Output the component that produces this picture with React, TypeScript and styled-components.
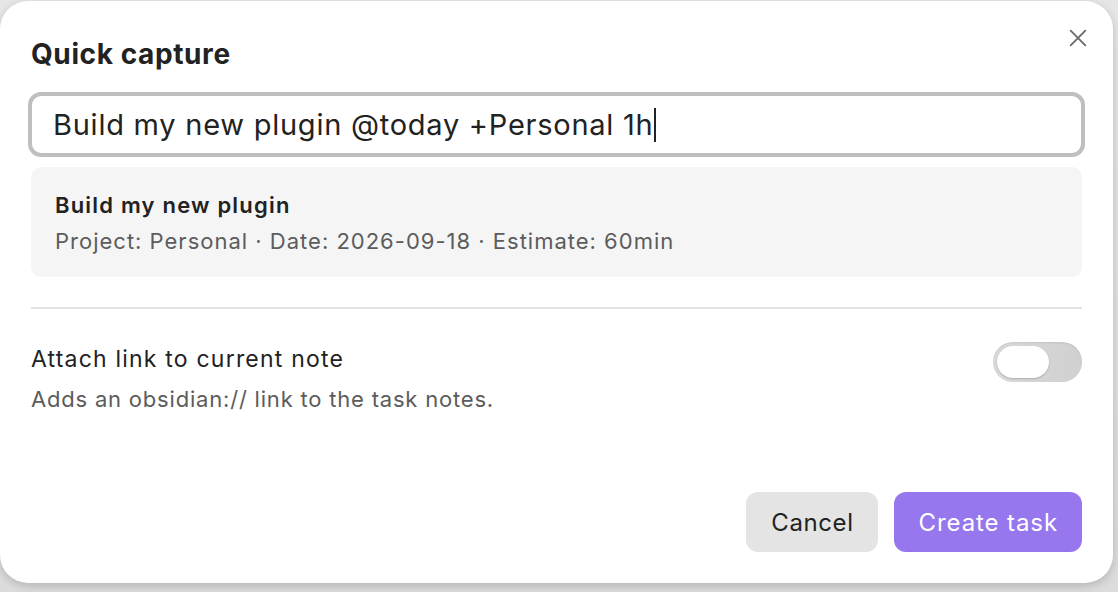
import React from 'react';
import styled, {createGlobalStyle} from 'styled-components';

const Global = createGlobalStyle`
    html, body {
        margin: 0;
        padding: 0;
        background: #e4e4e4;
        font-family: Inter, "Noto Sans", sans-serif;
        -webkit-font-smoothing: antialiased;
    }
`;

const Backdrop = styled.div`
    width: 1118px;
    height: 592px;
    overflow: hidden;
    background: linear-gradient(180deg, #e6e6e6 0%, #dcdcdc 100%);
`;

const Modal = styled.section`
    box-sizing: border-box;
    width: 1113px;
    height: 582px;
    margin-top: 1px;
    background: #ffffff;
    border-radius: 28px;
    box-shadow: 0 3px 10px rgba(0, 0, 0, 0.18);
    padding: 36px 31px 31px 31px;
    display: flex;
    flex-direction: column;
    position: relative;
`;

const Title = styled.h1`
    margin: 0;
    font-size: 28px;
    font-weight: 700;
    color: #222222;
    line-height: 34px;
    letter-spacing: 0.6px;
`;

const Close = styled.button`
    position: absolute;
    top: 24px;
    right: 22px;
    width: 26px;
    height: 26px;
    padding: 0;
    border: none;
    background: transparent;
    display: flex;
    align-items: center;
    justify-content: center;
    color: #6a6a6a;
`;

const Input = styled.div`
    box-sizing: border-box;
    margin: 21px -3px 0 -3px;
    height: 65px;
    border: 4px solid #bfbfbf;
    border-radius: 13px;
    padding: 0 0 0 21px;
    display: flex;
    align-items: center;
    font-size: 29px;
    color: #222222;
    letter-spacing: 0.75px;
`;

const Caret = styled.span`
    display: inline-block;
    width: 2px;
    height: 34px;
    background: #222;
`;

const Preview = styled.div`
    margin-top: 10px;
    background: #f5f5f5;
    border-radius: 10px;
    padding: 25px 24px 23px 24px;
    display: flex;
    flex-direction: column;
    gap: 10px;
`;

const PreviewTitle = styled.div`
    font-size: 22px;
    font-weight: 600;
    color: #222222;
    line-height: 26px;
    letter-spacing: 1.2px;
`;

const Meta = styled.div`
    font-size: 22px;
    color: #5c5c5c;
    line-height: 26px;
    letter-spacing: 1px;
`;

const Divider = styled.hr`
    margin: 30px 0 0 0;
    border: none;
    border-top: 2px solid #e3e3e3;
`;

const SettingRow = styled.div`
    margin-top: 36px;
    display: flex;
    justify-content: space-between;
    align-items: flex-start;
`;

const SettingText = styled.div`
    display: flex;
    flex-direction: column;
    gap: 13px;
`;

const SettingName = styled.div`
    font-size: 23px;
    color: #222222;
    line-height: 28px;
    letter-spacing: 1.2px;
`;

const SettingDesc = styled.div`
    font-size: 22px;
    color: #5c5c5c;
    line-height: 26px;
    letter-spacing: 0.8px;
`;

const Toggle = styled.div`
    box-sizing: border-box;
    margin-top: -3px;
    width: 89px;
    height: 40px;
    border-radius: 20px;
    background: linear-gradient(90deg, #dadada, #d0d0d0);
    box-shadow: inset 0 1px 2px rgba(0, 0, 0, 0.08);
    padding: 4px;
    display: flex;
`;

const Thumb = styled.div`
    width: 52px;
    height: 32px;
    border-radius: 16px;
    background: #ffffff;
    box-shadow: 0 1px 2px rgba(0, 0, 0, 0.2);
`;

const Footer = styled.div`
    margin-top: auto;
    display: flex;
    justify-content: flex-end;
    gap: 16px;
`;

const Button = styled.button<{primary?: boolean}>`
    height: 60px;
    padding: 0 24px 0 25px;
    border: none;
    border-radius: 12px;
    font-family: inherit;
    font-size: 24px;
    letter-spacing: ${p => (p.primary ? '0.9px' : '0.6px')};
    background: ${p => (p.primary ? '#9677ee' : '#e4e4e4')};
    color: ${p => (p.primary ? '#ffffff' : '#222222')};
`;

const App = () => {
    return (
        <Backdrop>
            <Global/>
            <Modal>
                <Title>Quick capture</Title>
                <Close aria-label="Close">
                    <svg width="22" height="22" viewBox="0 0 24 24" fill="none" stroke="currentColor" strokeWidth="2" strokeLinecap="round">
                        <path d="M4 4L20 20M20 4L4 20"/>
                    </svg>
                </Close>
                <Input>Build my new plugin @today +Personal 1h<Caret/></Input>
                <Preview>
                    <PreviewTitle>Build my new plugin</PreviewTitle>
                    <Meta>Project: Personal · Date: 2026-09-18 · Estimate: 60min</Meta>
                </Preview>
                <Divider/>
                <SettingRow>
                    <SettingText>
                        <SettingName>Attach link to current note</SettingName>
                        <SettingDesc>Adds an obsidian:// link to the task notes.</SettingDesc>
                    </SettingText>
                    <Toggle><Thumb/></Toggle>
                </SettingRow>
                <Footer>
                    <Button>Cancel</Button>
                    <Button primary>Create task</Button>
                </Footer>
            </Modal>
        </Backdrop>
    );
};

export default App;
